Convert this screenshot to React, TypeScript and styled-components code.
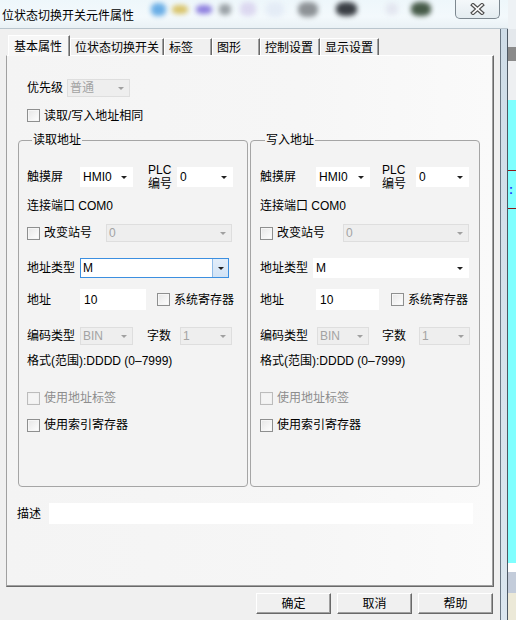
import React from 'react';
import styled, { createGlobalStyle, css } from 'styled-components';

const GlobalStyle = createGlobalStyle`
  html, body {
    margin: 0;
    padding: 0;
    width: 516px;
    height: 620px;
    overflow: hidden;
    background: #f0f0f0;
  }
  body {
    font-family: "Liberation Sans", "Noto Sans CJK SC", sans-serif;
    font-size: 12px;
    line-height: 14px;
    color: #000;
  }
  * { box-sizing: border-box; }
`;

type Kind = 'plain' | 'off' | 'focus';

type GroupCfg = {
  title: string;
  pad: number;
  hmiLabel: number;
  hmiW: number;
  plcMl: number;
  noMl: number;
  noW: number;
  stationLead: number;
  stationW: number;
  typeLabel: number;
  typeW: number;
  typeKind: Kind;
  addrLabel: number;
  addrW: number;
  sysMl: number;
  codeLabel: number;
  codeW: number;
  countMl: number;
  countLabel: number;
  countW: number;
};

const groups: GroupCfg[] = [
  {
    title: '读取地址', pad: 8,
    hmiLabel: 53, hmiW: 53, plcMl: 15, noMl: 5, noW: 56,
    stationLead: 79, stationW: 126,
    typeLabel: 53, typeW: 149, typeKind: 'focus',
    addrLabel: 53, addrW: 66, sysMl: 11,
    codeLabel: 53, codeW: 53, countMl: 14, countLabel: 33, countW: 52,
  },
  {
    title: '写入地址', pad: 9,
    hmiLabel: 56, hmiW: 54, plcMl: 12, noMl: 10, noW: 53,
    stationLead: 83, stationW: 126,
    typeLabel: 53, typeW: 156, typeKind: 'plain',
    addrLabel: 56, addrW: 63, sysMl: 12,
    codeLabel: 57, codeW: 52, countMl: 13, countLabel: 37, countW: 51,
  },
];

const tabs = ['基本属性', '位状态切换开关', '标签', '图形', '控制设置', '显示设置'];
const tabWidths = [62, 94, 48, 48, 60, 59];

// blurred desktop icons seen through the glass title bar
const blobs = [
  { ml: 9, w: 15, h: 13, c: '#6aaee6' },
  { ml: 6, w: 16, h: 9, c: '#d9c46a' },
  { ml: 8, w: 16, h: 9, c: '#8f80df' },
  { ml: 7, w: 12, h: 11, c: '#9aa1a6' },
  { ml: 9, w: 16, h: 14, c: '#dcd8f0' },
  { ml: 10, w: 18, h: 15, c: '#e4ecf6' },
  { ml: 14, w: 20, h: 15, c: '#8d9296' },
  { ml: 18, w: 21, h: 14, c: '#3a3e44' },
  { ml: 29, w: 12, h: 12, c: '#e3e6f0' },
  { ml: 13, w: 20, h: 14, c: '#465a48' },
];

function Combo({ w, kind = 'plain', value }: { w: number; kind?: Kind; value: string }) {
  return (
    <ComboBox $w={w} $kind={kind}>
      <ComboValue>{value}</ComboValue>
      <ArrowZone $kind={kind}>
        <Tri $off={kind === 'off'} />
      </ArrowZone>
    </ComboBox>
  );
}

function Check({ label, off, lead }: { label: string; off?: boolean; lead?: number }) {
  return (
    <CheckField $w={lead}>
      <Box $off={off} />
      <CheckText $off={off}>{label}</CheckText>
    </CheckField>
  );
}

function AddressGroup({ g }: { g: GroupCfg }) {
  return (
    <Group $pad={g.pad}>
      <Legend>{g.title}</Legend>
      <GRow $h={20} $mt={20}>
        <Label $w={g.hmiLabel}>触摸屏</Label>
        <Combo w={g.hmiW} value="HMI0" />
        <Stack $ml={g.plcMl}>
          <span>PLC</span>
          <span>编号</span>
        </Stack>
        <Spacer $w={g.noMl} />
        <Combo w={g.noW} value="0" />
      </GRow>
      <GRow $h={14} $mt={12}>
        <span>连接端口 COM0</span>
      </GRow>
      <GRow $h={18} $mt={11}>
        <Check label="改变站号" lead={g.stationLead} />
        <Combo w={g.stationW} kind="off" value="0" />
      </GRow>
      <GRow $h={20} $mt={16}>
        <Label $w={g.typeLabel}>地址类型</Label>
        <Combo w={g.typeW} kind={g.typeKind} value="M" />
      </GRow>
      <GRow $h={21} $mt={11}>
        <Label $w={g.addrLabel}>地址</Label>
        <TextInput $w={g.addrW}>10</TextInput>
        <Spacer $w={g.sysMl} />
        <Check label="系统寄存器" />
      </GRow>
      <GRow $h={18} $mt={17}>
        <Label $w={g.codeLabel}>编码类型</Label>
        <Combo w={g.codeW} kind="off" value="BIN" />
        <Spacer $w={g.countMl} />
        <Label $w={g.countLabel}>字数</Label>
        <Combo w={g.countW} kind="off" value="1" />
      </GRow>
      <GRow $h={14} $mt={9}>
        <span>格式(范围):DDDD (0–7999)</span>
      </GRow>
      <GRow $h={14} $mt={23}>
        <Check label="使用地址标签" off />
      </GRow>
      <GRow $h={14} $mt={13}>
        <Check label="使用索引寄存器" />
      </GRow>
    </Group>
  );
}

export default function App() {
  return (
    <>
      <GlobalStyle />
      <Screen>
        <Window>
          <TitleBar>
            <Title>位状态切换开关元件属性</Title>
            {blobs.map((b, i) => (
              <Blob key={i} $ml={b.ml} $w={b.w} $h={b.h} $c={b.c} />
            ))}
            <CloseButton>
              <svg width="15" height="12" viewBox="0 0 15 12">
                <path d="M3 2 L12 10 M12 2 L3 10" stroke="#505050" strokeWidth="4" strokeLinecap="square" />
                <path d="M3 2 L12 10 M12 2 L3 10" stroke="#ffffff" strokeWidth="1.6" strokeLinecap="square" />
              </svg>
            </CloseButton>
          </TitleBar>
          <Body>
            <Client>
              <TabStrip>
                {tabs.map((t, i) => (
                  <Tab key={t} $active={i === 0} $w={tabWidths[i]}>{t}</Tab>
                ))}
              </TabStrip>
              <Panel>
                <PriorityRow>
                  <Label $w={40}>优先级</Label>
                  <Combo w={63} kind="off" value="普通" />
                </PriorityRow>
                <SameRow>
                  <Check label="读取/写入地址相同" />
                </SameRow>
                <GroupRow>
                  {groups.map((g) => (
                    <AddressGroup key={g.title} g={g} />
                  ))}
                </GroupRow>
                <DescRow>
                  <DescLabel>描述</DescLabel>
                  <TextInput $w={424} />
                </DescRow>
              </Panel>
              <ButtonRow>
                <Button>确定</Button>
                <Button>取消</Button>
                <Button>帮助</Button>
              </ButtonRow>
            </Client>
            <Frame />
          </Body>
        </Window>
        <Backdrop>
          <BackBlock $h={29} $bg="#eef2f5" />
          <BackBlock $h={18} $bg="#e4e8ec" />
          <BackBlock $h={14} $bg="#8a8a8a" />
          <BackBlock $h={39} $bg="#eef0f2" />
          <BackBlock $h={70} $bg="#80ffff" />
          <RedLine />
          <BackBlock $h={37} $bg="#80ffff"><Colon>:</Colon></BackBlock>
          <RedLine />
          <BackBlock $h={354} $bg="#80ffff" />
          <BackBlock $h={9} $bg="#ffffff" />
          <BackBlock $h={21} $bg="#c3ccda" />
          <BackBlock $h={27} $bg="#ece9d8" />
        </Backdrop>
      </Screen>
    </>
  );
}

const Screen = styled.div`
  display: flex;
  width: 516px;
  height: 620px;
`;

const Window = styled.div`
  width: 508px;
  height: 620px;
  display: flex;
  flex-direction: column;
`;

const TitleBar = styled.div`
  height: 29px;
  display: flex;
  align-items: flex-start;
  background: linear-gradient(180deg, #eef7fb 0%, #f3f9fc 60%, #e9f1f5 100%);
  border-bottom: 1px solid #b9c5cd;
`;

const Title = styled.div`
  width: 142px;
  padding-left: 2px;
  line-height: 29px;
  font-size: 12px;
  color: #000;
  font-family: "Noto Sans CJK SC", sans-serif;
`;

const Blob = styled.span<{ $ml: number; $w: number; $h: number; $c: string }>`
  margin-left: ${(p) => p.$ml}px;
  margin-top: ${(p) => 9 - p.$h / 2}px;
  width: ${(p) => p.$w}px;
  height: ${(p) => p.$h}px;
  background: ${(p) => p.$c};
  border-radius: 40%;
  filter: blur(2.5px);
  flex-shrink: 0;
`;

const CloseButton = styled.div`
  margin-left: auto;
  margin-right: 8px;
  width: 45px;
  height: 19px;
  border: 1px solid #7d8890;
  border-top: none;
  border-radius: 0 0 5px 5px;
  background: linear-gradient(180deg, #f4f8fa, #e4ecf0);
  display: flex;
  align-items: center;
  justify-content: center;
`;

const Body = styled.div`
  flex: 1;
  display: flex;
`;

const Client = styled.div`
  width: 500px;
  background: #f0f0f0;
  display: flex;
  flex-direction: column;
`;

const Frame = styled.div`
  width: 8px;
  background: linear-gradient(180deg, #cfdde8, #dbe6ee);
  border-left: 1px solid #6b7884;
  border-right: 1px solid #4d5863;
`;

const TabStrip = styled.div`
  height: 26px;
  padding-left: 8px;
  display: flex;
  align-items: flex-end;
  position: relative;
  z-index: 1;
`;

const Tab = styled.div<{ $active: boolean; $w: number }>`
  width: ${(p) => p.$w}px;
  height: 17px;
  padding-left: 4px;
  line-height: 16px;
  white-space: nowrap;
  font-family: "Noto Sans CJK SC", sans-serif;
  background: #f0f0f0;
  border-top: 1px solid #ffffff;
  border-left: 1px solid #ffffff;
  border-right: 1px solid #696969;
  box-shadow: inset -1px 0 0 #a0a0a0;
  ${(p) =>
    p.$active &&
    css`
      height: 21px;
      margin-bottom: -1px;
      padding-left: 5px;
      line-height: 19px;
      background: #f7f7f7;
    `}
`;

const Panel = styled.div`
  margin-left: 6px;
  width: 488px;
  height: 532px;
  padding: 23px 0 0 11px;
  background: linear-gradient(90deg, #f4f4f4 0%, #f6f6f6 60%, #fafafa 100%);
  border-top: 1px solid #ffffff;
  border-left: 1px solid #a0a0a0;
  border-right: 1px solid #696969;
  border-bottom: 1px solid #696969;
  box-shadow: inset -1px -1px 0 #a0a0a0;
`;

const PriorityRow = styled.div`
  margin-left: 9px;
  height: 18px;
  display: flex;
  align-items: center;
`;

const SameRow = styled.div`
  margin: 12px 0 0 9px;
  height: 13px;
  display: flex;
  align-items: center;
`;

const GroupRow = styled.div`
  margin-top: 11px;
  height: 354px;
  display: flex;
  gap: 2px;
`;

const Group = styled.fieldset<{ $pad: number }>`
  margin: 0;
  min-width: 0;
  width: 230px;
  padding: 0 0 0 ${(p) => p.$pad}px;
  border: 1px solid #a5a5a5;
  border-radius: 4px;
  background: #f3f3f3;
`;

const Legend = styled.legend`
  margin-left: 5px;
  padding: 0 1px;
  font-size: 12px;
  line-height: 14px;
`;

const GRow = styled.div<{ $h: number; $mt: number }>`
  height: ${(p) => p.$h}px;
  margin-top: ${(p) => p.$mt}px;
  display: flex;
  align-items: center;
  white-space: nowrap;
`;

const Label = styled.span<{ $w: number }>`
  width: ${(p) => p.$w}px;
  flex-shrink: 0;
  white-space: nowrap;
`;

const Stack = styled.div<{ $ml: number }>`
  margin-left: ${(p) => p.$ml}px;
  width: 24px;
  display: flex;
  flex-direction: column;
  line-height: 14px;
`;

const Spacer = styled.span<{ $w: number }>`
  width: ${(p) => p.$w}px;
  flex-shrink: 0;
`;

const ComboBox = styled.div<{ $w: number; $kind: Kind }>`
  width: ${(p) => p.$w}px;
  height: 100%;
  flex-shrink: 0;
  display: flex;
  align-items: stretch;
  background: #ffffff;
  border: 1px solid #ffffff;
  ${(p) =>
    p.$kind === 'off' &&
    css`
      background: #eeeeee;
      border-color: #dedede;
      color: #a3a3a3;
    `}
  ${(p) =>
    p.$kind === 'focus' &&
    css`
      border-color: #3c8fe0;
    `}
`;

const ComboValue = styled.span`
  flex: 1;
  padding-left: 2px;
  display: flex;
  align-items: center;
  overflow: hidden;
`;

const ArrowZone = styled.span<{ $kind: Kind }>`
  width: 16px;
  display: flex;
  align-items: center;
  justify-content: center;
  ${(p) =>
    p.$kind === 'focus' &&
    css`
      background: linear-gradient(180deg, #e3eefa, #d2e3f5);
      border-left: 1px solid #8fbbe8;
    `}
`;

const Tri = styled.span<{ $off?: boolean }>`
  width: 0;
  height: 0;
  border-left: 3px solid transparent;
  border-right: 3px solid transparent;
  border-top: 3px solid ${(p) => (p.$off ? '#a0a0a0' : '#202020')};
`;

const TextInput = styled.div<{ $w: number }>`
  width: ${(p) => p.$w}px;
  height: 100%;
  flex-shrink: 0;
  background: #ffffff;
  padding-left: 4px;
  display: flex;
  align-items: center;
`;

const CheckField = styled.span<{ $w?: number }>`
  display: flex;
  align-items: center;
  flex-shrink: 0;
  ${(p) => p.$w !== undefined && css`width: ${p.$w}px;`}
`;

const Box = styled.span<{ $off?: boolean }>`
  width: 13px;
  height: 13px;
  flex-shrink: 0;
  border: 1px solid ${(p) => (p.$off ? '#bcbcbc' : '#8e8f8f')};
  background: ${(p) => (p.$off ? '#f4f4f4' : 'linear-gradient(135deg, #e6e6e6, #ffffff)')};
  box-shadow: inset 0 0 0 1px ${(p) => (p.$off ? '#f0f0f0' : '#f6f6f6')};
`;

const CheckText = styled.span<{ $off?: boolean }>`
  margin-left: 4px;
  color: ${(p) => (p.$off ? '#8d8d8d' : '#000')};
  white-space: nowrap;
`;

const DescRow = styled.div`
  margin-top: 16px;
  height: 21px;
  display: flex;
  align-items: center;
`;

const DescLabel = styled.span`
  margin-left: -1px;
  width: 32px;
  flex-shrink: 0;
`;

const ButtonRow = styled.div`
  margin-top: 6px;
  padding-right: 7px;
  display: flex;
  justify-content: flex-end;
  gap: 6px;
`;

const Button = styled.div`
  width: 75px;
  height: 21px;
  display: flex;
  align-items: center;
  justify-content: center;
  background: #f0f0f0;
  border-top: 1px solid #ffffff;
  border-left: 1px solid #ffffff;
  border-right: 1px solid #696969;
  border-bottom: 1px solid #696969;
  box-shadow: inset -1px -1px 0 #a0a0a0;
`;

const Backdrop = styled.div`
  width: 8px;
  height: 620px;
  display: flex;
  flex-direction: column;
`;

const BackBlock = styled.div<{ $h: number; $bg: string }>`
  height: ${(p) => p.$h}px;
  background: ${(p) => p.$bg};
  flex-shrink: 0;
  position: relative;
`;

const RedLine = styled.div`
  height: 1px;
  background: #8b1a1a;
`;

const Colon = styled.span`
  position: absolute;
  left: 1px;
  top: 12px;
  color: #1a3cff;
  font-weight: bold;
  font-size: 12px;
`;
